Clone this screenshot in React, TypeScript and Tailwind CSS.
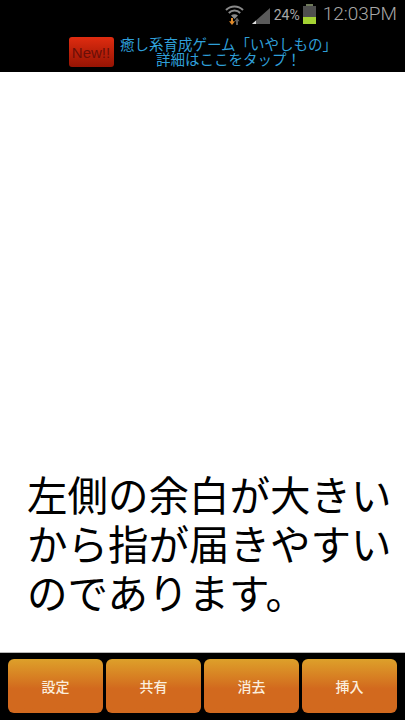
const CJK = "font-['Noto_Sans_CJK_JP','Noto_Sans',sans-serif]";

const buttons = ["設定", "共有", "消去", "挿入"];

function WifiIcon() {
  return (
    <svg width="19" height="21" viewBox="0 0 19 21" fill="none">
      <path d="M1 6C5.8 1.2 13.2 1.2 18 6" stroke="#8a8a8a" strokeWidth="2" />
      <path d="M3.8 9C7 5.8 12 5.8 15.2 9" stroke="#8a8a8a" strokeWidth="2" />
      <path d="M6 11.5C8.2 9.8 10.8 9.8 13 11.5L9.5 15Z" fill="#8a8a8a" />
      <path d="M7 14V18" stroke="#e08a2a" strokeWidth="2" />
      <path d="M4 17.2H10L7 21Z" fill="#e08a2a" />
      <path d="M12 21V16.5" stroke="#5f5f5f" strokeWidth="2" />
      <path d="M9.5 17.2H14.5L12 13.5Z" fill="#5f5f5f" />
    </svg>
  );
}

function SignalIcon() {
  return (
    <svg width="18" height="16" viewBox="0 0 18 16">
      <path d="M0 16L18 0V16Z" fill="#5a5a5a" />
      <path d="M0 16L4 12.5V16Z" fill="#e0e0e0" />
    </svg>
  );
}

function BatteryIcon() {
  return (
    <div className="flex flex-col items-center w-[13px] h-[20px]">
      <div className="w-[7px] h-[2px] bg-[#6f7a5a]" />
      <div className="w-full flex-1 flex flex-col bg-[#4f4f4f]">
        <div className="flex-1" />
        <div className="h-[7px] bg-[#a4d233]" />
      </div>
    </div>
  );
}

export default function App() {
  return (
    <div className={`w-[405px] h-[720px] flex flex-col bg-white overflow-hidden ${CJK}`}>
      {/* status bar */}
      <div className="h-[27px] bg-black flex items-center justify-end pr-[8px] font-['Roboto',sans-serif] text-[#a8a8a8]">
        <div className="mt-[1px]">
          <WifiIcon />
        </div>
        <div className="ml-[8px] mt-[5px]">
          <SignalIcon />
        </div>
        <span className="ml-[4px] mt-[2px] text-[14px] leading-none">24%</span>
        <div className="ml-[3px] mt-[1px]">
          <BatteryIcon />
        </div>
        <span className="ml-[7px] text-[19px] leading-none font-light">12:03PM</span>
      </div>

      {/* ad banner */}
      <div className="h-[45px] bg-black flex items-start justify-center pl-[1px]">
        <div className="w-[45px] h-[30px] mt-[10px] rounded-[3px] bg-gradient-to-b from-[#e02c10] to-[#961404] flex items-center justify-center">
          <span className="font-['Liberation_Sans',sans-serif] text-[15px] text-[#6a0f08] leading-none">New!!</span>
        </div>
        <div className="ml-[6px] w-[218px] text-center text-[#2f9fd8] text-[14.5px] leading-[15px] mt-[9px]">
          <div className="whitespace-nowrap">癒し系育成ゲーム「いやしもの」</div>
          <div className="whitespace-nowrap">詳細はここをタップ！</div>
        </div>
      </div>

      {/* note body */}
      <div className="flex-1 flex flex-col justify-end pl-[27px] pb-[36px] text-black text-[40.5px] leading-[49px]">
        <div className="whitespace-nowrap">左側の余白が大きい</div>
        <div className="whitespace-nowrap">から指が届きやすい</div>
        <div className="whitespace-nowrap">のであります。</div>
      </div>

      {/* bottom buttons */}
      <div className="h-[68px] bg-black border-t border-[#b8b8b8] grid grid-cols-4 gap-[3px] pl-[8px] pr-[8px] pt-[6px] pb-[7px]">
        {buttons.map((label) => (
          <div
            key={label}
            className="rounded-[6px] bg-gradient-to-b from-[#dda02a] via-[#d2691e] via-55% to-[#d2691e] flex items-center justify-center text-[#fbeedd] text-[14px] font-medium"
          >
            {label}
          </div>
        ))}
      </div>
    </div>
  );
}
